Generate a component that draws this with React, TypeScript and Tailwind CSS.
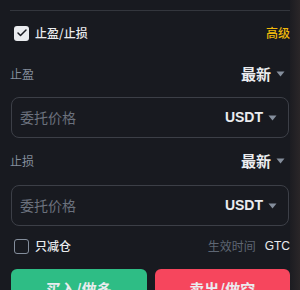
import { Check } from "lucide-react";

const font = { fontFamily: '"Noto Sans CJK SC", "Noto Sans", sans-serif' };
const latin = { fontFamily: '"Liberation Sans", "Noto Sans CJK SC", sans-serif' };

function Caret() {
  return (
    <svg width="9" height="6" viewBox="0 0 9 6" className="ml-[5px]">
      <path d="M0.5 0.5 L8.5 0.5 L4.5 5.5 Z" fill="#848e9c" />
    </svg>
  );
}

function PriceInput() {
  return (
    <div className="mx-[1px] h-[41px] rounded-[8px] border border-[#3c3f47] flex items-center justify-between pl-[8px] pr-[11px]">
      <span className="text-[14px] text-[#6b717d]">委托价格</span>
      <div className="flex items-center">
        <span className="text-[14px] font-bold text-[#eaecef]" style={latin}>USDT</span>
        <Caret />
      </div>
    </div>
  );
}

function LabelRow({ label }: { label: string }) {
  return (
    <div className="flex items-center justify-between h-[22px]">
      <span className="text-[12px] text-[#848e9c]">{label}</span>
      <div className="flex items-center pr-[5px]">
        <span className="text-[15px] font-bold text-[#eaecef]">最新</span>
        <Caret />
      </div>
    </div>
  );
}

export default function App() {
  return (
    <div className="w-[300px] h-[290px] overflow-hidden flex bg-[#181a20]" style={font}>
      <div className="w-[290px] shrink-0 pl-[10px]">
        <div className="mt-[10px] h-px bg-[#33363d]" />
        <div className="flex items-center justify-between pl-[4px] mt-[14px] h-[16px]">
          <div className="flex items-center gap-[6px]">
            <div className="w-[15px] h-[15px] rounded-[3px] bg-[#eaecef] flex items-center justify-center">
              <Check size={12} strokeWidth={3} color="#181a20" />
            </div>
            <span className="text-[12px] font-medium text-[#eaecef]">止盈/止损</span>
          </div>
          <span className="text-[12px] font-medium text-[#f0b90b]">高级</span>
        </div>
        <div className="mt-[22px]">
          <LabelRow label="止盈" />
        </div>
        <div className="mt-[12px]">
          <PriceInput />
        </div>
        <div className="mt-[12px]">
          <LabelRow label="止损" />
        </div>
        <div className="mt-[13px]">
          <PriceInput />
        </div>
        <div className="flex items-center justify-between pl-[4px] mt-[12px] h-[16px]">
          <div className="flex items-center gap-[6px]">
            <div className="w-[15px] h-[15px] rounded-[3px] border border-[#848e9c]" />
            <span className="text-[12px] font-medium text-[#eaecef]">只减仓</span>
          </div>
          <div className="flex items-center gap-[9px]">
            <span className="text-[12px] text-[#5e6673]">生效时间</span>
            <span className="text-[12px] text-[#eaecef]" style={latin}>GTC</span>
          </div>
        </div>
        <div className="flex gap-[8px] pl-[1px] mt-[15px]">
          <button className="flex-1 h-[36px] rounded-[6px] bg-[#2ebd85] text-[15px] font-bold text-[#eaecef] flex items-start justify-center pt-[9px]">买入/做多</button>
          <button className="flex-1 h-[36px] rounded-[6px] bg-[#f6465d] text-[15px] font-bold text-[#eaecef] flex items-start justify-center pt-[9px]">卖出/做空</button>
        </div>
      </div>
      <div className="flex-1 bg-gradient-to-r from-[#1c1c21] to-[#2a2628]" />
    </div>
  );
}
